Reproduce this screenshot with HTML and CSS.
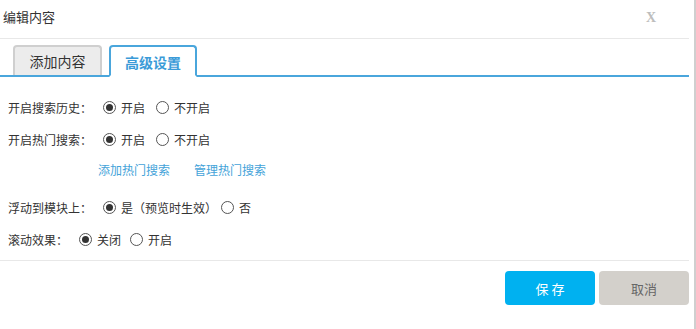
FILE: index.html
```html
<!DOCTYPE html>
<html lang="zh-CN">
<head>
    <meta charset="UTF-8">
    <meta name="viewport" content="width=device-width, initial-scale=1.0">
    <title>编辑内容</title>
    <link rel="stylesheet" href="styles.css">
</head>
<body>
    <div class="dialog">
        <!-- 标题栏 -->
        <div class="dialog-header">
            <span class="dialog-title">编辑内容</span>
            <span class="dialog-close">X</span>
        </div>

        <!-- 选项卡 -->
        <div class="tabs">
            <div class="tab">添加内容</div>
            <div class="tab active">高级设置</div>
        </div>

        <!-- 设置项 -->
        <div class="dialog-body">
            <div class="row">
                <span class="row-label">开启搜索历史：</span>
                <label class="option"><input type="radio" name="history" checked><span>开启</span></label>
                <label class="option"><input type="radio" name="history"><span>不开启</span></label>
            </div>
            <div class="row">
                <span class="row-label">开启热门搜索：</span>
                <label class="option"><input type="radio" name="hot" checked><span>开启</span></label>
                <label class="option"><input type="radio" name="hot"><span>不开启</span></label>
            </div>
            <div class="row links">
                <a href="#">添加热门搜索</a>
                <a href="#">管理热门搜索</a>
            </div>
            <div class="row row-gap">
                <span class="row-label">浮动到模块上：</span>
                <label class="option tight"><input type="radio" name="float" checked><span>是（预览时生效）</span></label>
                <label class="option"><input type="radio" name="float"><span>否</span></label>
            </div>
            <div class="row">
                <span class="row-label">滚动效果：</span>
                <label class="option small"><input type="radio" name="scroll" checked><span>关闭</span></label>
                <label class="option"><input type="radio" name="scroll"><span>开启</span></label>
            </div>
        </div>

        <!-- 底部按钮 -->
        <div class="dialog-footer">
            <button class="btn btn-save">保 存</button>
            <button class="btn btn-cancel">取消</button>
        </div>
    </div>
    <div class="scroll-strip"></div>
</body>
</html>
```

FILE: styles.css
```css
body {
    margin: 0;
    background: #fff;
    font-family: "Noto Sans CJK SC", "Liberation Sans", sans-serif;
    font-size: 12px;
    color: #333;
    display: flex;
    width: 696px;
    height: 329px;
    overflow: hidden;
}
.dialog {
    width: 689px;
    margin-right: 5px;
}
.dialog-header {
    height: 39px;
    border-bottom: 1px solid #e8e8e8;
    display: flex;
    align-items: center;
    justify-content: space-between;
    padding: 0 0 5px 3px;
    box-sizing: border-box;
}
.dialog-title {
    font-size: 13px;
}
.dialog-close {
    font-family: "Liberation Serif", serif;
    font-weight: bold;
    font-size: 14px;
    color: #bdbdbd;
    margin-right: 33px;
    margin-top: 2px;
}
.tabs {
    display: flex;
    padding: 6px 0 0 13px;
    border-bottom: 2px solid #4aa6dc;
    height: 30px;
}
.tab {
    width: 89px;
    height: 30px;
    box-sizing: border-box;
    border: 2px solid #cfcfcf;
    border-bottom: none;
    border-radius: 4px 4px 0 0;
    background: #ececec;
    font-size: 14px;
    line-height: 29px;
    text-align: center;
    margin-right: 7px;
}
.tab.active {
    width: 88px;
    height: 32px;
    border: 2px solid #4aa6dc;
    border-bottom: 2px solid #fff;
    background: #fff;
    color: #3b9bd8;
    font-weight: bold;
    line-height: 30px;
}
.dialog-body {
    padding: 14px 0 5px 8px;
    border-bottom: 1px solid #e8e8e8;
}
.row {
    height: 32px;
    display: flex;
    align-items: center;
}
.row-label {
    margin-right: 11px;
}
.option {
    display: flex;
    align-items: center;
    margin-right: 11px;
}
.option.tight {
    margin-right: 4px;
}
.option.small {
    margin-right: 9px;
}
.option input {
    appearance: none;
    -webkit-appearance: none;
    width: 13px;
    height: 13px;
    margin: 0 5px 0 0;
    border: 1px solid #555;
    border-radius: 50%;
    background: #fff;
    box-sizing: border-box;
    position: relative;
}
.option input:checked::after {
    content: "";
    position: absolute;
    left: 2px;
    top: 2px;
    width: 7px;
    height: 7px;
    border-radius: 50%;
    background: #333;
}
.links {
    height: 28px;
    padding-left: 90px;
}
.links a {
    color: #44a3d9;
    text-decoration: none;
    margin-right: 24px;
}
.row-gap {
    margin-top: 8px;
}
.dialog-footer {
    display: flex;
    justify-content: flex-end;
    padding-top: 10px;
}
.btn {
    width: 90px;
    height: 34px;
    border: none;
    border-radius: 4px;
    font-family: "Noto Sans CJK SC", "Liberation Sans", sans-serif;
    font-size: 13px;
    cursor: pointer;
}
.btn-save {
    background: #00b1f0;
    color: #fff;
    margin-right: 4px;
}
.btn-cancel {
    background: #d3d0cb;
    color: #666;
}
.scroll-strip {
    width: 2px;
    background: #cfcfcf;
}
```
